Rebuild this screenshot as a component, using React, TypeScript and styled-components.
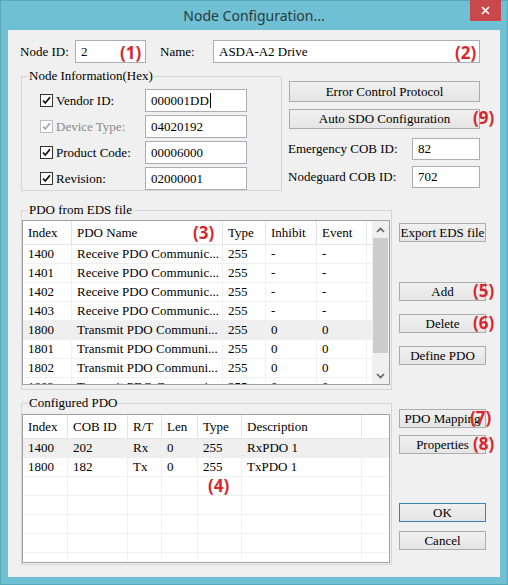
import React from 'react';
import styled, { createGlobalStyle } from 'styled-components';

const Global = createGlobalStyle`
  html, body { margin: 0; padding: 0; background: #ffffff; }
  body { font-family: "Liberation Serif", "Times New Roman", serif; }
  * { box-sizing: border-box; }
`;

const Window = styled.div`
  width: 508px;
  height: 585px;
  background: #6fc0d3;
  border: 1px solid #58a8bc;
  display: flex;
  flex-direction: column;
`;

const TitleBar = styled.div`
  height: 29px;
  position: relative;
  display: flex;
  align-items: center;
  justify-content: center;
  font-family: "Noto Sans", "Open Sans", sans-serif;
  font-size: 14px;
  color: #2b3a3e;
`;

const CloseButton = styled.div`
  position: absolute;
  top: -1px;
  right: 6px;
  width: 31px;
  height: 21px;
  background: #c9484c;
  display: flex;
  align-items: center;
  justify-content: center;
`;

const Client = styled.div`
  margin: 0 7px 7px 7px;
  flex: 1;
  background: #f0f0f0;
  padding: 10px 0 0 13px;
  display: flex;
  flex-direction: column;
  font-size: 13px;
  color: #000;
`;

const TopRow = styled.div`
  display: flex;
  align-items: center;
  height: 23px;
  margin-left: -1px;
`;

const Label = styled.span<{ $w?: number; $ml?: number; $disabled?: boolean }>`
  display: inline-block;
  width: ${(p) => (p.$w ? `${p.$w}px` : 'auto')};
  margin-left: ${(p) => p.$ml ?? 0}px;
  color: ${(p) => (p.$disabled ? '#8a8a8a' : '#000')};
  white-space: nowrap;
`;

const TextBox = styled.div<{ $w: number; $h?: number }>`
  position: relative;
  width: ${(p) => p.$w}px;
  height: ${(p) => p.$h ?? 23}px;
  border: 1px solid #abadb3;
  background: #fff;
  display: flex;
  align-items: center;
  padding-left: 5px;
  white-space: nowrap;
`;

const Caret = styled.span`
  display: inline-block;
  width: 1px;
  height: 15px;
  background: #000;
  margin-left: 1px;
`;

const Mark = styled.span<{ $x: number; $y: number }>`
  position: absolute;
  left: ${(p) => p.$x}px;
  top: ${(p) => p.$y}px;
  font-family: "Open Sans", "Noto Sans", sans-serif;
  font-weight: 700;
  font-size: 17px;
  line-height: 20px;
  color: #d8262c;
  white-space: nowrap;
  pointer-events: none;
`;

const InfoRow = styled.div`
  display: flex;
  margin-top: 6px;
`;

const Group = styled.fieldset<{ $w: number }>`
  width: ${(p) => p.$w}px;
  margin: 0;
  min-width: 0;
  border: 1px solid #d5d5d5;
`;

const Legend = styled.legend`
  margin-left: 6px;
  padding: 0 1px;
  font-size: 13px;
  line-height: 14px;
`;

const InfoGroup = styled(Group)`
  padding: 6px 0 0 0;
  display: flex;
  flex-direction: column;
  gap: 3px;
`;

const FieldRow = styled.div`
  display: flex;
  align-items: center;
  height: 23px;
  padding-left: 18px;
`;

const CheckBox = styled.span<{ $disabled?: boolean }>`
  width: 13px;
  height: 13px;
  border: 1px solid ${(p) => (p.$disabled ? '#bcbcbc' : '#333333')};
  background: #fff;
  display: inline-flex;
  align-items: center;
  justify-content: center;
  margin-right: 3px;
  flex: none;
`;

const RightColumn = styled.div`
  width: 191px;
  margin-left: 7px;
  padding-top: 12px;
  display: flex;
  flex-direction: column;
`;

const Button = styled.button<{ $w: number; $h: number; $default?: boolean }>`
  width: ${(p) => p.$w}px;
  height: ${(p) => p.$h}px;
  border: 1px solid ${(p) => (p.$default ? '#3c7fb1' : '#acacac')};
  background: linear-gradient(#f0f0f0, #e5e5e5);
  font-family: "Liberation Serif", "Times New Roman", serif;
  font-size: 13px;
  color: #000;
  padding: 0;
  white-space: nowrap;
  display: block;
`;

const BtnHolder = styled.div<{ $mt?: number }>`
  position: relative;
  margin-top: ${(p) => p.$mt ?? 0}px;
`;

const CobRow = styled.div<{ $mt: number }>`
  display: flex;
  align-items: center;
  margin-top: ${(p) => p.$mt}px;
  margin-left: -1px;
`;

const Lower = styled.div`
  display: grid;
  grid-template-columns: 371px 87px;
  column-gap: 7px;
  row-gap: 6px;
  margin-top: 12px;
`;

const ListGroup = styled(Group)<{ $mt: number; $pb: number }>`
  padding: 0 1px ${(p) => p.$pb}px 0;
  & > div:first-of-type {
    margin-top: ${(p) => p.$mt}px;
  }
`;

const ListFrame = styled.div<{ $h: number }>`
  position: relative;
  height: ${(p) => p.$h}px;
  border: 1px solid #a0a0a0;
  background: #fff;
  display: flex;
  overflow: hidden;
`;

const ListBody = styled.div`
  flex: 1;
  display: flex;
  flex-direction: column;
  overflow: hidden;
`;

const HeaderRow = styled.div`
  display: flex;
  height: 24px;
  flex: none;
  border-bottom: 1px solid #e5e5e5;
`;

const HeaderCell = styled.div<{ $w?: number }>`
  position: relative;
  width: ${(p) => (p.$w ? `${p.$w}px` : 'auto')};
  flex: ${(p) => (p.$w ? 'none' : '1')};
  border-right: 1px solid ${(p) => (p.$w ? '#e5e5e5' : 'transparent')};
  padding-left: 5px;
  display: flex;
  align-items: center;
  white-space: nowrap;
`;

const DataRow = styled.div<{ $hl?: boolean }>`
  display: flex;
  height: 19px;
  flex: none;
  border-bottom: 1px solid #f0f0f0;
  background: ${(p) => (p.$hl ? '#efefef' : '#fff')};
`;

const DataCell = styled.div<{ $w?: number }>`
  width: ${(p) => (p.$w ? `${p.$w}px` : 'auto')};
  flex: ${(p) => (p.$w ? 'none' : '1')};
  border-right: 1px solid ${(p) => (p.$w ? '#f0f0f0' : 'transparent')};
  padding-left: 5px;
  line-height: 18px;
  white-space: nowrap;
  overflow: hidden;
`;

const ScrollBar = styled.div`
  width: 17px;
  flex: none;
  background: #f0f0f0;
  display: flex;
  flex-direction: column;
`;

const ScrollArrow = styled.div`
  height: 17px;
  flex: none;
  display: flex;
  align-items: center;
  justify-content: center;
`;

const ScrollTrack = styled.div`
  flex: 1;
  padding: 0 1px;
  display: flex;
  flex-direction: column;
`;

const ScrollThumb = styled.div`
  height: 115px;
  background: #cdcdcd;
`;

const ButtonColumn = styled.div<{ $pt: number }>`
  padding-top: ${(p) => p.$pt}px;
  display: flex;
  flex-direction: column;
`;

type Col = { w?: number; label: string; mark?: { text: string; x: number; y: number } };

function ListView(props: {
  cols: Col[];
  rows: string[][];
  height: number;
  highlight?: number;
  scroll?: boolean;
  overlay?: React.ReactNode;
}) {
  const { cols, rows, height, highlight, scroll, overlay } = props;
  return (
    <ListFrame $h={height}>
      <ListBody>
        <HeaderRow>
          {cols.map((c, i) => (
            <HeaderCell key={i} $w={c.w}>
              {c.label}
              {c.mark && (
                <Mark $x={c.mark.x} $y={c.mark.y}>
                  {c.mark.text}
                </Mark>
              )}
            </HeaderCell>
          ))}
        </HeaderRow>
        {rows.map((r, ri) => (
          <DataRow key={ri} $hl={ri === highlight}>
            {cols.map((c, ci) => (
              <DataCell key={ci} $w={c.w}>
                {r[ci] ?? ''}
              </DataCell>
            ))}
          </DataRow>
        ))}
      </ListBody>
      {scroll && (
        <ScrollBar>
          <ScrollArrow>
            <svg width="9" height="6" viewBox="0 0 9 6">
              <polyline points="1,5 4.5,1.5 8,5" fill="none" stroke="#606060" strokeWidth="1.6" />
            </svg>
          </ScrollArrow>
          <ScrollTrack>
            <ScrollThumb />
          </ScrollTrack>
          <ScrollArrow>
            <svg width="9" height="6" viewBox="0 0 9 6">
              <polyline points="1,1 4.5,4.5 8,1" fill="none" stroke="#606060" strokeWidth="1.6" />
            </svg>
          </ScrollArrow>
        </ScrollBar>
      )}
      {overlay}
    </ListFrame>
  );
}

function Tick({ color }: { color: string }) {
  return (
    <svg width="9" height="9" viewBox="0 0 9 9">
      <polyline points="1,4.5 3.3,7 8,1.3" fill="none" stroke={color} strokeWidth="1.8" />
    </svg>
  );
}

const infoFields = [
  { label: 'Vendor ID:', value: '000001DD', caret: true },
  { label: 'Device Type:', value: '04020192', disabled: true },
  { label: 'Product Code:', value: '00006000' },
  { label: 'Revision:', value: '02000001' },
];

const edsCols: Col[] = [
  { w: 49, label: 'Index' },
  { w: 151, label: 'PDO Name', mark: { text: '(3)', x: 121, y: 2 } },
  { w: 43, label: 'Type' },
  { w: 51, label: 'Inhibit' },
  { w: 50, label: 'Event' },
  { label: '' },
];

const rx = 'Receive PDO Communic...';
const tx = 'Transmit PDO Communi...';
const edsRows = [
  ['1400', rx, '255', '-', '-'],
  ['1401', rx, '255', '-', '-'],
  ['1402', rx, '255', '-', '-'],
  ['1403', rx, '255', '-', '-'],
  ['1800', tx, '255', '0', '0'],
  ['1801', tx, '255', '0', '0'],
  ['1802', tx, '255', '0', '0'],
  ['1803', tx, '255', '0', '0'],
];

const cfgCols: Col[] = [
  { w: 45, label: 'Index' },
  { w: 60, label: 'COB ID' },
  { w: 34, label: 'R/T' },
  { w: 36, label: 'Len' },
  { w: 44, label: 'Type' },
  { w: 120, label: 'Description' },
  { label: '' },
];

const cfgRows = [
  ['1400', '202', 'Rx', '0', '255', 'RxPDO 1'],
  ['1800', '182', 'Tx', '0', '255', 'TxPDO 1'],
  [],
  [],
  [],
  [],
  [],
];

export default function App() {
  return (
    <>
      <Global />
      <Window>
        <TitleBar>
          Node Configuration...
          <CloseButton>
            <svg width="9" height="9" viewBox="0 0 9 9">
              <path d="M1 1 L8 8 M8 1 L1 8" stroke="#ffffff" strokeWidth="1.6" />
            </svg>
          </CloseButton>
        </TitleBar>
        <Client>
          <TopRow>
            <Label $w={55}>Node ID:</Label>
            <TextBox $w={71}>
              2
              <Mark $x={44} $y={2}>(1)</Mark>
            </TextBox>
            <Label $w={53} $ml={14}>Name:</Label>
            <TextBox $w={267}>
              ASDA-A2 Drive
              <Mark $x={241} $y={2}>(2)</Mark>
            </TextBox>
          </TopRow>

          <InfoRow>
            <InfoGroup $w={261}>
              <Legend>Node Information(Hex)</Legend>
              {infoFields.map((f) => (
                <FieldRow key={f.label}>
                  <CheckBox $disabled={f.disabled}>
                    <Tick color={f.disabled ? '#a6a6a6' : '#111111'} />
                  </CheckBox>
                  <Label $w={89} $disabled={f.disabled}>
                    {f.label}
                  </Label>
                  <TextBox $w={102}>
                    {f.value}
                    {f.caret && <Caret />}
                  </TextBox>
                </FieldRow>
              ))}
            </InfoGroup>
            <RightColumn>
              <Button $w={191} $h={21}>Error Control Protocol</Button>
              <BtnHolder $mt={7}>
                <Button $w={191} $h={20}>Auto SDO Configuration</Button>
                <Mark $x={184} $y={-1}>(9)</Mark>
              </BtnHolder>
              <CobRow $mt={9}>
                <Label $w={124}>Emergency COB ID:</Label>
                <TextBox $w={68} $h={22}>82</TextBox>
              </CobRow>
              <CobRow $mt={6}>
                <Label $w={124}>Nodeguard COB ID:</Label>
                <TextBox $w={68} $h={22}>702</TextBox>
              </CobRow>
            </RightColumn>
          </InfoRow>

          <Lower>
            <ListGroup $w={371} $mt={3} $pb={4}>
              <Legend>PDO from EDS file</Legend>
              <ListView cols={edsCols} rows={edsRows} height={165} highlight={4} scroll />
            </ListGroup>
            <ButtonColumn $pt={20}>
              <Button $w={87} $h={19}>Export EDS file</Button>
              <BtnHolder $mt={40}>
                <Button $w={87} $h={19}>Add</Button>
                <Mark $x={74} $y={-1}>(5)</Mark>
              </BtnHolder>
              <BtnHolder $mt={13}>
                <Button $w={87} $h={19}>Delete</Button>
                <Mark $x={74} $y={-1}>(6)</Mark>
              </BtnHolder>
              <BtnHolder $mt={13}>
                <Button $w={87} $h={19}>Define PDO</Button>
              </BtnHolder>
            </ButtonColumn>

            <ListGroup $w={371} $mt={4} $pb={1}>
              <Legend>Configured PDO</Legend>
              <ListView
                cols={cfgCols}
                rows={cfgRows}
                height={149}
                highlight={0}
                overlay={<Mark $x={185} $y={61}>(4)</Mark>}
              />
            </ListGroup>
            <ButtonColumn $pt={13}>
              <BtnHolder>
                <Button $w={87} $h={19}>PDO Mapping</Button>
                <Mark $x={71} $y={-1}>(7)</Mark>
              </BtnHolder>
              <BtnHolder $mt={7}>
                <Button $w={87} $h={19}>Properties</Button>
                <Mark $x={74} $y={-1}>(8)</Mark>
              </BtnHolder>
              <BtnHolder $mt={49}>
                <Button $w={87} $h={19} $default>OK</Button>
              </BtnHolder>
              <BtnHolder $mt={9}>
                <Button $w={87} $h={19}>Cancel</Button>
              </BtnHolder>
            </ButtonColumn>
          </Lower>
        </Client>
      </Window>
    </>
  );
}
